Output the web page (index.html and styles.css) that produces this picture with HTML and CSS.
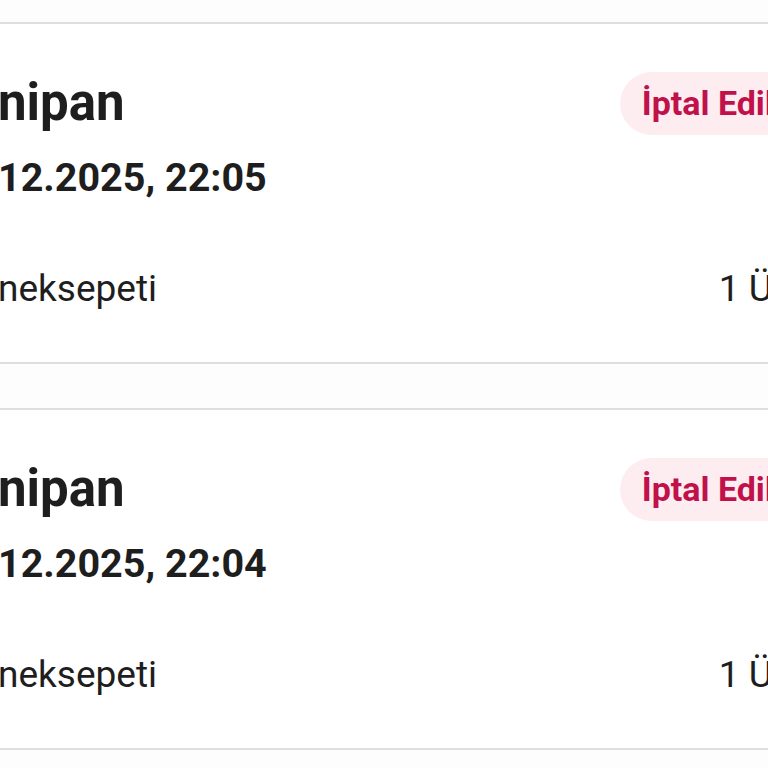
FILE: index.html
```html
<!DOCTYPE html>
<html lang="tr">
<head>
    <meta charset="UTF-8">
    <meta name="viewport" content="width=device-width, initial-scale=1.0">
    <title>Siparişler</title>
    <link rel="stylesheet" href="styles.css">
</head>
<body>
    <div class="list">
        <!-- Sipariş 1 -->
        <div class="card">
            <div class="head">
                <div class="info">
                    <div class="name">nipan</div>
                    <div class="date">12.2025, 22:05</div>
                </div>
                <span class="badge">İptal Edildi</span>
            </div>
            <div class="meta">
                <span class="shop">neksepeti</span>
                <span class="count">1 Ürün</span>
            </div>
        </div>

        <!-- Sipariş 2 -->
        <div class="card">
            <div class="head">
                <div class="info">
                    <div class="name">nipan</div>
                    <div class="date">12.2025, 22:04</div>
                </div>
                <span class="badge">İptal Edildi</span>
            </div>
            <div class="meta">
                <span class="shop">neksepeti</span>
                <span class="count">1 Ürün</span>
            </div>
        </div>
    </div>
</body>
</html>
```

FILE: styles.css
```css
body {
    margin: 0;
    overflow: hidden;
    background-color: #fdfdfd;
    font-family: Roboto, "Liberation Sans", sans-serif;
    color: #1e1e1e;
}
.list {
    width: 870px;
    padding-top: 22px;
    display: flex;
    flex-direction: column;
    gap: 44px;
}
.card {
    background-color: #fff;
    border-top: 2px solid #dedede;
    border-bottom: 2px solid #dedede;
    padding: 48px 32px 49px 0;
}
.head {
    display: flex;
    justify-content: space-between;
    align-items: flex-start;
}
.info {
    margin-left: -2px;
    padding-top: 3px;
}
.name {
    font-size: 51px;
    font-weight: 700;
    line-height: 56px;
}
.date {
    margin-top: 23px;
    font-size: 39.5px;
    font-weight: 700;
    line-height: 48px;
}
.badge {
    margin-right: 14px;
    padding: 12px 22px;
    border-radius: 32px;
    background-color: #fdedf1;
    color: #c0114b;
    font-size: 34px;
    font-weight: 700;
    line-height: 39px;
}
.meta {
    margin-top: 63px;
    display: flex;
    justify-content: space-between;
    font-size: 37px;
    line-height: 48px;
}
.shop {
    margin-left: -2px;
}
.count {
    margin-right: 12px;
}
```
